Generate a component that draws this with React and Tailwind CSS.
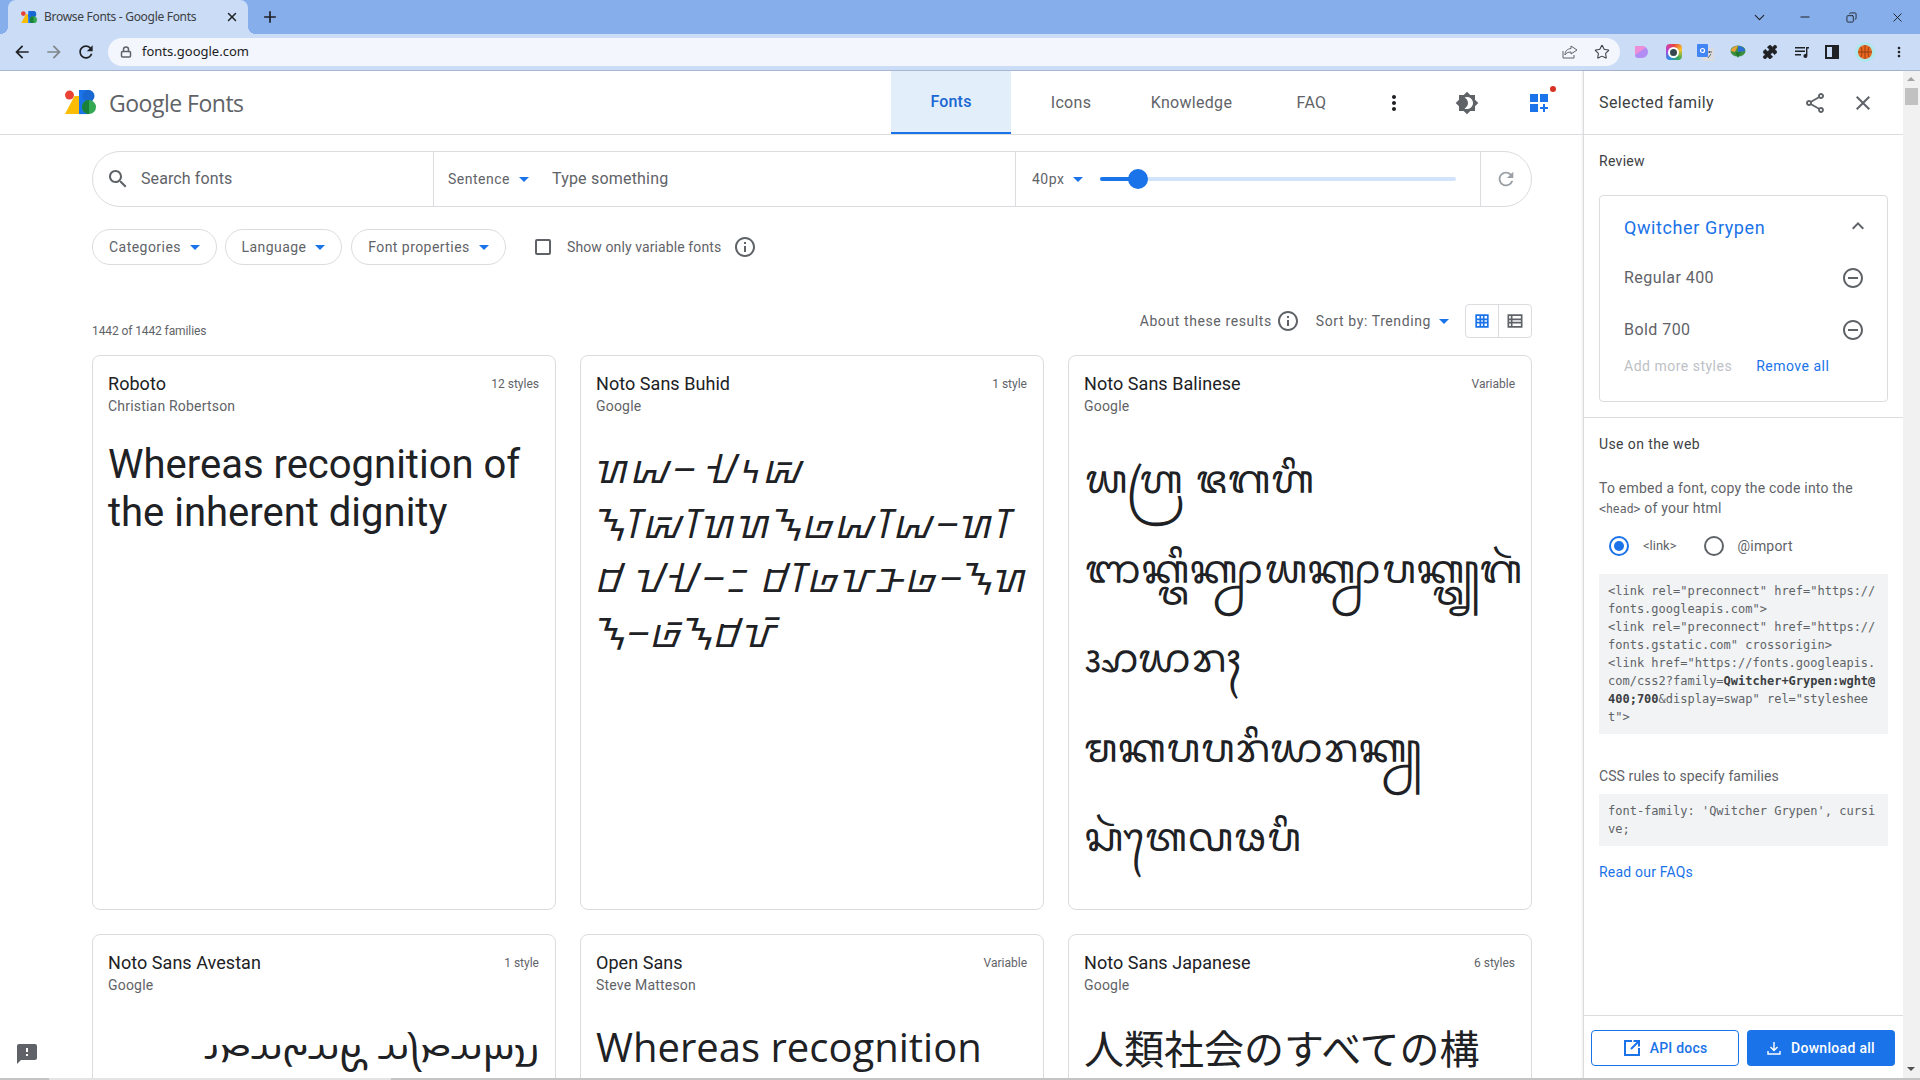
import React from "react";
import { ChevronDown, Minus, X, Star, Puzzle, Lock, Copy } from "lucide-react";

const sans = "font-['Roboto',sans-serif]";

const Mat = ({ d, className = "", size = 24 }) => (
  <svg width={size} height={size} viewBox="0 0 24 24" fill="currentColor" className={`shrink-0 ${className}`}>
    <path d={d} />
  </svg>
);

const ICON = {
  back: "M20 11H7.83l5.59-5.59L12 4l-8 8 8 8 1.41-1.41L7.83 13H20v-2z",
  forward: "M4 11h12.17l-5.59-5.59L12 4l8 8-8 8-1.41-1.41L16.17 13H4v-2z",
  reload: "M17.65 6.35C16.2 4.9 14.21 4 12 4c-4.42 0-7.99 3.58-7.99 8s3.57 8 7.99 8c3.73 0 6.84-2.55 7.73-6h-2.08c-.82 2.33-3.04 4-5.65 4-3.31 0-6-2.69-6-6s2.69-6 6-6c1.66 0 3.14.69 4.22 1.78L13 11h7V4l-2.35 2.35z",
  search: "M15.5 14h-.79l-.28-.27C15.41 12.59 16 11.11 16 9.5 16 5.91 13.09 3 9.5 3S3 5.91 3 9.5 5.91 16 9.5 16c1.61 0 3.09-.59 4.23-1.57l.27.28v.79l5 4.99L20.49 19l-4.99-5zm-6 0C7.01 14 5 11.99 5 9.5S7.01 5 9.5 5 14 7.01 14 9.5 11.99 14 9.5 14z",
  info: "M11 7h2v2h-2zm0 4h2v6h-2zm1-9C6.48 2 2 6.48 2 12s4.48 10 10 10 10-4.48 10-10S17.52 2 12 2zm0 18c-4.41 0-8-3.59-8-8s3.59-8 8-8 8 3.59 8 8-3.59 8-8 8z",
  share: "M18 16.08c-.76 0-1.44.3-1.96.77L8.91 12.7c.05-.23.09-.46.09-.7s-.04-.47-.09-.7l7.05-4.11c.54.5 1.25.81 2.04.81 1.66 0 3-1.34 3-3s-1.34-3-3-3-3 1.34-3 3c0 .24.04.47.09.7L8.04 9.81C7.5 9.31 6.79 9 6 9c-1.66 0-3 1.34-3 3s1.34 3 3 3c.79 0 1.5-.31 2.04-.81l7.12 4.16c-.05.21-.08.43-.08.65 0 1.61 1.31 2.92 2.92 2.92s2.92-1.31 2.92-2.92-1.31-2.92-2.92-2.92zM18 4c.55 0 1 .45 1 1s-.45 1-1 1-1-.45-1-1 .45-1 1-1zM6 13c-.55 0-1-.45-1-1s.45-1 1-1 1 .45 1 1-.45 1-1 1zm12 7.02c-.55 0-1-.45-1-1s.45-1 1-1 1 .45 1 1-.45 1-1 1z",
  close: "M19 6.41 17.59 5 12 10.59 6.41 5 5 6.41 10.59 12 5 17.59 6.41 19 12 13.41 17.59 19 19 17.59 13.41 12z",
  remove: "M7 11v2h10v-2H7zm5-9C6.48 2 2 6.48 2 12s4.48 10 10 10 10-4.48 10-10S17.52 2 12 2zm0 18c-4.41 0-8-3.59-8-8s3.59-8 8-8 8 3.59 8 8-3.59 8-8 8z",
  less: "M12 8l-6 6 1.41 1.41L12 10.83l4.59 4.58L18 14z",
  theme: "M20 8.69V4h-4.69L12 .69 8.69 4H4v4.69L.69 12 4 15.31V20h4.69L12 23.31 15.31 20H20v-4.69L23.31 12 20 8.69zM12 18c-.89 0-1.74-.2-2.5-.55C11.56 16.5 13 14.42 13 12s-1.44-4.5-3.5-5.45C10.26 6.2 11.11 6 12 6c3.31 0 6 2.69 6 6s-2.69 6-6 6z",
  kebab: "M12 8c1.1 0 2-.9 2-2s-.9-2-2-2-2 .9-2 2 .9 2 2 2zm0 2c-1.1 0-2 .9-2 2s.9 2 2 2 2-.9 2-2-.9-2-2-2zm0 6c-1.1 0-2 .9-2 2s.9 2 2 2 2-.9 2-2-.9-2-2-2z",
  feedback: "M20 2H4c-1.1 0-1.99.9-1.99 2L2 22l4-4h14c1.1 0 2-.9 2-2V4c0-1.1-.9-2-2-2zm-7 12h-2v-2h2v2zm0-4h-2V6h2v4z",
  grid: "M4 4h16v16H4zM6 6v3h3V6zm5 0v3h2V6zm4 0v3h3V6zM6 11v2h3v-2zm5 0v2h2v-2zm4 0v2h3v-2zM6 15v3h3v-3zm5 0v3h2v-3zm4 0v3h3v-3z",
  list: "M3 4h18v16H3zM5 6v3h2V6zm4 0v3h10V6zM5 11v2h2v-2zm4 0v2h10v-2zM5 15v3h2v-3zm4 0v3h10v-3z",
};

const Caret = ({ className = "ml-2" }) => <span className={`inline-block h-0 w-0 border-x-[5px] border-t-[5px] border-x-transparent border-t-[#1a73e8] ${className}`} />;

const Logo = ({ size = 31 }) => (
  <svg width={size} height={size * 0.78} viewBox="0 0 31 24" className="shrink-0">
    <path d="M0 24 L9.5 6 L14 6 L14 24 Z" fill="#fbbc04" />
    <circle cx="4.5" cy="5" r="4.5" fill="#ea4335" />
    <path d="M14 0 H23 A6 6 0 0 1 23 12 H14 Z" fill="#1a73e8" />
    <path d="M14 6 H23 V24 H14 Z" fill="#1a73e8" />
    <circle cx="23.5" cy="6" r="6" fill="#1967d2" />
    <circle cx="24" cy="17" r="7" fill="#34a853" />
    <path d="M24 10 A7 7 0 0 0 24 24 Z" fill="#188038" />
  </svg>
);

const BrowserChrome = () => (
  <div className="shrink-0 font-['Noto_Sans',sans-serif]">
    <div className="flex h-[34px] items-stretch bg-[#85aeea]">
      <div className="relative ml-2 flex w-[240px] items-center rounded-t-lg bg-[#cadcf6] pl-[13px] pr-[9px]">
        <span className="absolute -left-2 bottom-0 h-2 w-2 bg-[radial-gradient(circle_at_0_0,transparent_8px,#cadcf6_8px)]" />
        <span className="absolute -right-2 bottom-0 h-2 w-2 bg-[radial-gradient(circle_at_100%_0,transparent_8px,#cadcf6_8px)]" />
        <Logo size={16} />
        <span className="ml-[7px] flex-1 text-[12px] tracking-[-0.3px] text-[#3c4043]">Browse Fonts - Google Fonts</span>
        <X size={14} strokeWidth={2.5} className="text-[#202124]" />
      </div>
      <div className="ml-[12px] flex items-center text-[#202124]">
        <Mat d="M19 13h-6v6h-2v-6H5v-2h6V5h2v6h6v2z" size={20} />
      </div>
      <div className="ml-auto flex items-center text-[#202124]">
        <div className="flex w-[46px] justify-center"><ChevronDown size={17} strokeWidth={1.5} /></div>
        <div className="flex w-[46px] justify-center"><Minus size={14} strokeWidth={1.7} /></div>
        <div className="flex w-[46px] justify-center"><Copy size={11} strokeWidth={1.9} className="-scale-x-100" /></div>
        <div className="flex w-[46px] justify-center"><X size={15} strokeWidth={1.5} /></div>
      </div>
    </div>
    <div className="box-content flex h-[36px] items-center border-b border-[#a8b6d2] bg-[#cadcf6]">
      <div className="flex w-[108px] items-center pl-[12px] text-[#202124]">
        <Mat d={ICON.back} size={20} />
        <Mat d={ICON.forward} size={20} className="ml-3 text-[#80868b]" />
        <Mat d={ICON.reload} size={20} className="ml-3" />
      </div>
      <div className="flex h-[28px] w-[1512px] items-center rounded-full bg-[#f3f6fc] pl-[12px] pr-[10px]">
        <Lock size={12} strokeWidth={3} className="text-[#5f6368]" />
        <span className="ml-[10px] flex-1 text-[13px] text-[#202124]">fonts.google.com</span>
        <svg width="16" height="16" viewBox="0 0 16 16" fill="none" stroke="#5f6368" strokeWidth="1" className="mr-[16px]">
          <path d="M1 7v7h11v-3M9 2l6 4-6 4V8C6 8 4 9 3 11c0-4 2-6 6-6.5z" />
        </svg>
        <Star size={16} strokeWidth={1.6} className="text-[#3c4043]" />
      </div>
      <div className="flex flex-1 items-center justify-around pl-[6px] pr-[5px]">
        <svg width="16" height="16" viewBox="0 0 16 16"><path d="M1 2h7a6 6 0 0 1 0 12H4a3 3 0 0 1-3-3z" fill="#b18cf2" /><path d="M1 2h7a6 6 0 0 1 4 1.6L1 11z" fill="#ef8ed8" /></svg>
        <div className="flex h-4 w-4 items-center justify-center rounded bg-[conic-gradient(#e8463a,#f7c631,#34a853,#2b8be8,#c33fd0,#e8463a)]"><span className="h-[11px] w-[11px] rounded-full border-2 border-white bg-[#37474f]" /></div>
        <svg width="17" height="17" viewBox="0 0 17 17"><rect x="6" y="4" width="11" height="13" fill="#dadce0" /><path d="M10 8h5M12.5 7v2M11 14l3-4" stroke="#5f6368" strokeWidth="1" /><rect width="11" height="13" rx="1" fill="#4285f4" /><circle cx="5.5" cy="6.5" r="2" fill="none" stroke="#fff" strokeWidth="1.2" /></svg>
        <svg width="16" height="16" viewBox="0 0 16 16"><ellipse cx="8" cy="7" rx="7.5" ry="5.5" fill="#3c8f3c" /><path d="M1 7a7 5 0 0 1 7-5l-3 6z" fill="#e8a13a" /><path d="M8 2a7 5 0 0 1 7 5l-7 1z" fill="#2b6fd6" /><path d="M5 8h6l-3 6z" fill="#1f7a2f" /></svg>
        <Puzzle size={16} fill="#202124" strokeWidth={1} className="text-[#202124]" />
        <svg width="16" height="16" viewBox="0 0 16 16" fill="#202124"><path d="M1 3h10v1.4H1zM1 6.5h10v1.4H1zM1 10h6v1.4H1zM12 3h3v1.5h-1.6V12a2 2 0 1 1-1.4-1.9z" /></svg>
        <div className="flex h-[14px] w-[14px] justify-end border-2 border-[#202124]"><span className="h-full w-[5px] bg-[#202124]" /></div>
        <div className="flex h-5 w-5 items-center justify-center rounded-full bg-[#aee8ea]">
          <svg width="14" height="14" viewBox="0 0 14 14"><circle cx="7" cy="7" r="7" fill="#e8671f" /><path d="M7 0v14M0 7h14M2.5 2c2 2 2 8 0 10M11.5 2c-2 2-2 8 0 10" fill="none" stroke="#7a2f0a" strokeWidth=".7" /></svg>
        </div>
        <Mat d={ICON.kebab} size={16} className="text-[#202124]" />
      </div>
    </div>
  </div>
);

const NavItem = ({ children, className }) => (
  <div className={`flex items-center justify-center pt-[1px] text-[16px] tracking-[0.3px] text-[#5f6368] ${className}`}>{children}</div>
);

const Header = () => (
  <div className={`flex h-[64px] shrink-0 items-stretch border-b border-[#dadce0] ${sans}`}>
    <div className="ml-[65px] flex w-[826px] items-center">
      <Logo />
      <span className="ml-[13px] pt-[1px] font-['Open_Sans',sans-serif] text-[23px] tracking-[-0.5px] text-[#5f6368]">Google Fonts</span>
    </div>
    <div className="flex w-[120px] items-center justify-center border-b-2 border-[#1a73e8] bg-[#e3eefb] pt-[1px] text-[16px] font-medium tracking-[0.2px] text-[#1967d2]">Fonts</div>
    <NavItem className="ml-[40px] w-[40px]">Icons</NavItem>
    <NavItem className="ml-[59px] w-[83px]">Knowledge</NavItem>
    <NavItem className="ml-[63px] w-[31px]">FAQ</NavItem>
    <div className="ml-[55px] flex items-center text-[#202124]"><Mat d={ICON.kebab} size={24} /></div>
    <div className="ml-[49px] flex items-center text-[#5f6368]"><Mat d={ICON.theme} size={24} /></div>
    <div className="relative ml-[51px] flex items-center">
      <svg width="18" height="18" viewBox="0 0 18 18" fill="#1a73e8">
        <path d="M0 0h8v8H0zM10 0h8v8h-8zM0 10h8v8H0zM13 10h2v3h3v2h-3v3h-2v-3h-3v-2h3z" />
      </svg>
      <span className="absolute left-[20px] top-[15px] h-[6px] w-[6px] rounded-full bg-[#d93025]" />
    </div>
  </div>
);

const SearchBar = () => (
  <div className={`flex h-[56px] items-stretch rounded-[28px] border border-[#dadce0] ${sans}`}>
    <div className="flex w-[341px] items-center border-r border-[#dadce0] pl-[13px]">
      <Mat d={ICON.search} className="text-[#5f6368]" />
      <span className="ml-[11px] text-[16px] tracking-[0.1px] text-[#5f6368]">Search fonts</span>
    </div>
    <div className="flex w-[582px] items-center border-r border-[#dadce0] pl-[14px]">
      <span className="text-[14px] tracking-[0.5px] text-[#5f6368]">Sentence</span>
      <Caret className="ml-[9px]" />
      <span className="ml-[23px] text-[16px] tracking-[0.2px] text-[#5f6368]">Type something</span>
    </div>
    <div className="flex w-[465px] items-center border-r border-[#dadce0] pl-[16px]">
      <span className="text-[14px] tracking-[0.5px] text-[#5f6368]">40px</span>
      <Caret className="ml-[9px]" />
      <div className="relative ml-[17px] h-[4px] w-[356px] rounded-full bg-[#d2e3fc]">
        <div className="h-full w-[38px] rounded-full bg-[#1a73e8]" />
        <span className="absolute left-[28px] top-[-8px] h-5 w-5 rounded-full bg-[#1a73e8]" />
      </div>
    </div>
    <div className="flex flex-1 items-center justify-center text-[#9aa0a6]"><Mat d={ICON.reload} size={22} /></div>
  </div>
);

const Pill = ({ label, width }) => (
  <div className={`flex h-[36px] items-center justify-center rounded-[18px] border border-[#dadce0] text-[14px] tracking-[0.45px] text-[#5f6368] ${width}`}>
    {label}
    <Caret className="ml-[9px]" />
  </div>
);

const Filters = () => (
  <div className={`mt-[22px] flex items-center ${sans}`}>
    <Pill label="Categories" width="w-[125px]" />
    <div className="ml-[8px]"><Pill label="Language" width="w-[117px]" /></div>
    <div className="ml-[9px]"><Pill label="Font properties" width="w-[155px]" /></div>
    <span className="ml-[29px] h-[16px] w-[16px] rounded-[2px] border-2 border-[#5f6368]" />
    <span className="ml-[16px] text-[14px] tracking-[0.1px] text-[#5f6368]">Show only variable fonts</span>
    <Mat d={ICON.info} className="ml-[12px] text-[#5f6368]" />
  </div>
);

const ResultsBar = () => (
  <div className={`mt-[39px] flex h-[34px] items-center text-[#5f6368] ${sans}`}>
    <span className="mt-[20px] text-[12px] tracking-[-0.1px]">1442 of 1442 families</span>
    <span className="ml-auto text-[14px] tracking-[0.6px]">About these results</span>
    <Mat d={ICON.info} className="ml-[4px]" />
    <span className="ml-[16px] text-[14px] tracking-[0.6px]">Sort by: Trending</span>
    <Caret />
    <div className="ml-[16px] flex h-[34px] w-[67px] items-stretch rounded-[4px] border border-[#dadce0]">
      <div className="flex w-[33px] items-center justify-center border-r border-[#dadce0] text-[#1a73e8]"><Mat d={ICON.grid} size={20} /></div>
      <div className="flex flex-1 items-center justify-center"><Mat d={ICON.list} size={20} /></div>
    </div>
  </div>
);

const Card = ({ name, by, meta, children, clip }) => (
  <div className={`overflow-hidden rounded-[8px] border border-[#dadce0] px-[15px] pt-[15px] ${clip ? "h-[200px]" : "h-[555px]"} ${sans}`}>
    <div className="flex h-[24px] items-center justify-between">
      <span className="text-[18px] tracking-[0.05px] text-[#202124]">{name}</span>
      <span className="mr-[1px] pt-[1px] text-[12px] text-[#5f6368]">{meta}</span>
    </div>
    <div className="mt-[1px] text-[14px] leading-[20px] tracking-[0.2px] text-[#5f6368]">{by}</div>
    {children}
  </div>
);

const Line = ({ children }) => <span className="block whitespace-nowrap">{children}</span>;

const buhid = [
  "\u174c\u1746\u174d \u1747\u1744\u1746\u1752",
  "\u1750\u1748\u1746\u1752\u1748\u174c\u174c\u1750\u174f\u1746\u1748\u1746\u174d\u174c\u1748",
  "\u174b \u1740\u1747\u174d\u1743 \u174b\u1748\u174f\u1749\u1745\u174f\u174d\u1750\u174c",
  "\u1750\u174d\u174f\u1752\u1750\u174b\u1749\u1752",
];

const balinese = [
  "\u1b2c\u1b33\u1b44\u1b2d \u1b1a\u1b15\u1b33\u1b36",
  "\u1b1c\u1b13\u1b44\u1b22\u1b36\u1b13\u1b44\u1b2c\u1b35\u1b2c\u1b13\u1b44\u1b2c\u1b35\u1b27\u1b13\u1b44\u1b22\u1b44\u1b2c\u1b15\u1b03",
  "\u1b06\u1b2c\u1b35\u1b2d\u1b04",
  "\u1b2b\u1b13\u1b27\u1b27\u1b2d\u1b36\u1b2c\u1b35\u1b2d\u1b13\u1b44\u1b2c",
  "\u1b32\u1b03\u1b22\u1b3e\u1b19\u1b28\u1b27\u1b36",
];

const avestan = "\u{10b15}\u{10b13}\u{10b00}\u{10b19}\u{10b26}\u{10b00} \u{10b18}\u{10b00}\u{10b14}\u{10b00}\u{10b19}\u{10b0c}";

const ReviewPanel = () => (
  <div className={`flex w-[320px] shrink-0 flex-col border-l border-[#dadce0] shadow-[-1px_0_2px_rgba(0,0,0,0.08)] ${sans}`}>
    <div className="flex h-[64px] shrink-0 items-center border-b border-[#dadce0] pl-[15px] pr-[28px] text-[#5f6368]">
      <span className="flex-1 text-[16px] tracking-[0.4px] text-[#3c4043]">Selected family</span>
      <Mat d={ICON.share} />
      <Mat d={ICON.close} className="ml-[24px]" />
    </div>
    <div className="shrink-0 border-b border-[#dadce0] px-[15px] pb-[15px] pt-[16px]">
      <div className="text-[14px] leading-[20px] tracking-[0.3px] text-[#3c4043]">Review</div>
      <div className="mt-[24px] h-[207px] rounded-[4px] border border-[#dadce0] pl-[24px] pr-[22px] pt-[19px]">
        <div className="flex h-[24px] items-center justify-between">
          <span className="text-[18px] tracking-[0.6px] text-[#1a73e8]">Qwitcher Grypen</span>
          <Mat d={ICON.less} size={24} className="-mr-[5px] -mt-[2px] text-[#5f6368]" />
        </div>
        <div className="mt-[21px] flex h-[36px] items-center justify-between text-[16px] tracking-[0.45px] text-[#5f6368]">Regular 400<Mat d={ICON.remove} /></div>
        <div className="mt-[16px] flex h-[36px] items-center justify-between text-[16px] tracking-[0.45px] text-[#5f6368]">Bold 700<Mat d={ICON.remove} /></div>
        <div className="mt-[8px] flex text-[14px] leading-[20px] tracking-[0.5px]">
          <span className="text-[#bdc1c6]">Add more styles</span>
          <span className="ml-[24px] text-[#1a73e8]">Remove all</span>
        </div>
      </div>
    </div>
    <div className="flex-1 px-[15px] pt-[16px]">
      <div className="text-[14px] leading-[20px] tracking-[0.4px] text-[#3c4043]">Use on the web</div>
      <p className="mt-[24px] text-[14px] leading-[20px] tracking-[0.22px] text-[#5f6368]">
        To embed a font, copy the code into the<br />
        <span className="font-['DejaVu_Sans_Mono',monospace] text-[11.5px] tracking-normal">&lt;head&gt;</span> of your html
      </p>
      <div className="mt-[15px] flex h-[24px] items-center text-[14px] text-[#5f6368]">
        <span className="ml-[10px] flex h-5 w-5 items-center justify-center rounded-full border-2 border-[#1a73e8]"><span className="h-[10px] w-[10px] rounded-full bg-[#1a73e8]" /></span>
        <span className="ml-[14px] text-[13px]">&lt;link&gt;</span>
        <span className="ml-[27px] h-5 w-5 rounded-full border-2 border-[#5f6368]" />
        <span className="ml-[14px] tracking-[0.2px]">@import</span>
      </div>
      <pre className="mt-[16px] h-[160px] whitespace-pre-wrap break-all bg-[#f1f3f4] px-[9px] py-[8px] font-['DejaVu_Sans_Mono',monospace] text-[12px] leading-[18px] text-[#5f6368]">
        {'<link rel="preconnect" href="https://fonts.googleapis.com">\n<link rel="preconnect" href="https://fonts.gstatic.com" crossorigin>\n<link href="https://fonts.googleapis.com/css2?family='}
        <b className="text-[#3c4043]">Qwitcher+Grypen:wght@400;700</b>
        {'&display=swap" rel="stylesheet">'}
      </pre>
      <div className="mt-[32px] text-[14px] leading-[20px] tracking-[0.1px] text-[#5f6368]">CSS rules to specify families</div>
      <pre className="mt-[8px] h-[52px] whitespace-pre-wrap break-all bg-[#f1f3f4] px-[9px] py-[8px] font-['DejaVu_Sans_Mono',monospace] text-[12px] leading-[18px] text-[#5f6368]">font-family: 'Qwitcher Grypen', cursive;</pre>
      <div className="mt-[16px] text-[14px] leading-[20px] tracking-[0.2px] text-[#1a73e8]">Read our FAQs</div>
    </div>
    <div className="flex h-[65px] shrink-0 items-center gap-[8px] border-t border-[#dadce0] pl-[7px]">
      <div className="flex h-[36px] w-[148px] items-center justify-center rounded-[4px] border border-[#1a73e8] text-[14px] font-medium tracking-[0.2px] text-[#1a73e8]">
        <svg width="18" height="18" viewBox="0 0 18 18" fill="none" stroke="currentColor" strokeWidth="2" className="mr-[9px]">
          <path d="M9 2H2v14h14V9M8 10l8-8M10.5 2H16v5.5" />
        </svg>
        API docs
      </div>
      <div className="flex h-[36px] w-[148px] items-center justify-center rounded-[4px] bg-[#1a73e8] text-[14px] font-medium tracking-[0.3px] text-white">
        <svg width="14" height="14" viewBox="0 0 14 14" fill="none" stroke="currentColor" strokeWidth="1.4" className="mr-[10px]">
          <path d="M7 1v8M3.5 6 7 9.5 10.5 6M1 10v3h12v-3" />
        </svg>
        Download all
      </div>
    </div>
  </div>
);

const Scrollbar = () => (
  <div className="relative w-[17px] shrink-0 bg-[#f1f1f1]">
    <span className="absolute left-[4px] top-[6px] h-0 w-0 border-x-[4px] border-b-[4px] border-x-transparent border-b-[#a3a3a3]" />
    <span className="absolute left-[2px] top-[17px] h-[17px] w-[13px] bg-[#c1c1c1]" />
    <span className="absolute bottom-[9px] left-[4px] h-0 w-0 border-x-[4px] border-t-[4px] border-x-transparent border-t-[#505050]" />
  </div>
);

export default function App() {
  return (
    <div className="relative flex h-[1080px] w-[1920px] flex-col overflow-hidden bg-white">
      <BrowserChrome />
      <div className="flex min-h-0 flex-1">
        <div className="relative min-w-0 flex-1 overflow-hidden">
          <Header />
          <div className="pl-[92px] pr-[51px] pt-[16px]">
            <SearchBar />
            <Filters />
            <ResultsBar />
            <div className="mt-[17px] grid grid-cols-3 gap-[24px]">
              <Card name="Roboto" by="Christian Robertson" meta="12 styles">
                <p className="mt-[25px] text-[40px] leading-[48px] text-[#202124]">Whereas recognition of the inherent dignity</p>
              </Card>
              <Card name="Noto Sans Buhid" by="Google" meta="1 style">
                <p lang="bku" className="mt-[25px] font-['Noto_Sans_Buhid',sans-serif] text-[40px] leading-[54.5px] text-[#202124]">
                  {buhid.map((l) => <Line key={l}>{l}</Line>)}
                </p>
              </Card>
              <Card name="Noto Sans Balinese" by="Google" meta="Variable">
                <p lang="ban" className="mt-[22px] font-['Noto_Sans_Balinese',sans-serif] text-[40px] leading-[89.5px] text-[#202124]">
                  {balinese.map((l) => <Line key={l}>{l}</Line>)}
                </p>
              </Card>
              <Card name="Noto Sans Avestan" by="Google" meta="1 style" clip>
                <p dir="rtl" lang="ae" className="mt-[27px] whitespace-nowrap font-['Noto_Sans_Avestan',sans-serif] text-[40px] leading-[49px] text-[#202124]">{avestan}</p>
              </Card>
              <Card name="Open Sans" by="Steve Matteson" meta="Variable" clip>
                <p className="mt-[27px] font-['Open_Sans',sans-serif] text-[40px] leading-[49px] text-[#202124]">Whereas recognition</p>
              </Card>
              <Card name="Noto Sans Japanese" by="Google" meta="6 styles" clip>
                <p lang="ja" className="mt-[28px] whitespace-nowrap font-['Noto_Sans_CJK_JP',sans-serif] text-[40px] leading-[49px] text-[#202124]">人類社会のすべての構</p>
              </Card>
            </div>
          </div>
          <div className="absolute bottom-[14px] left-[15px] text-[#5f6368]"><Mat d={ICON.feedback} /></div>
        </div>
        <ReviewPanel />
        <Scrollbar />
      </div>
      <div className="absolute bottom-0 left-0 h-[2px] w-full bg-[#c4c4c4]">
        <div className="ml-[49px] h-full w-[342px] bg-[#e4e4e4]" />
      </div>
    </div>
  );
}
